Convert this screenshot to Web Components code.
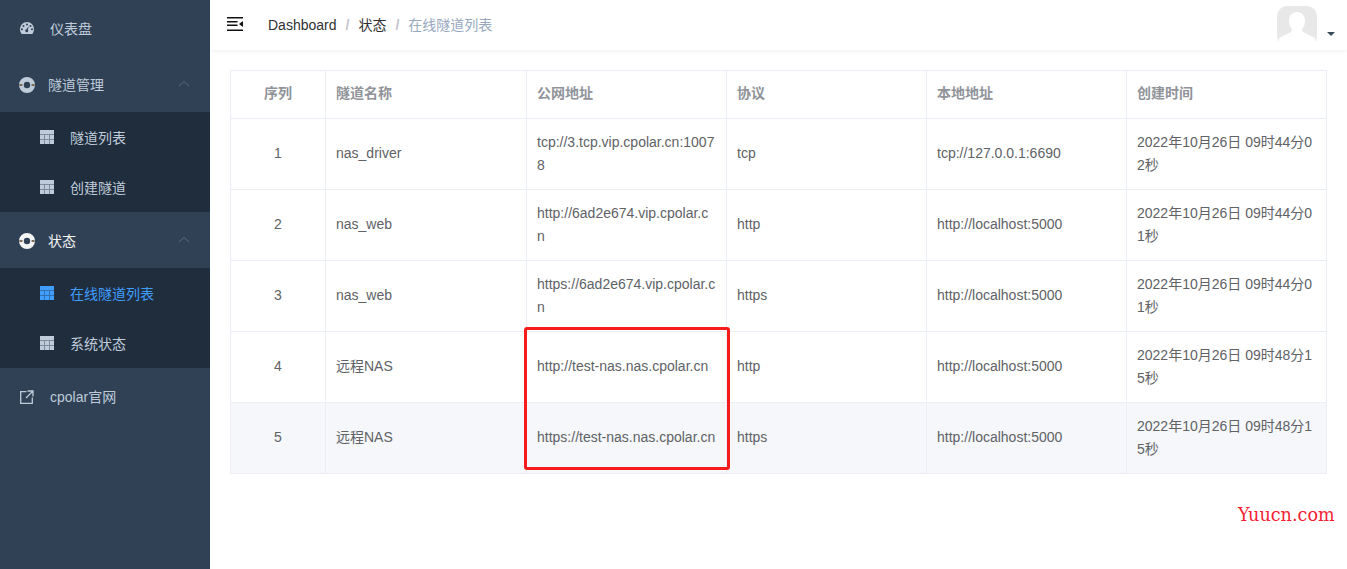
<!DOCTYPE html>
<html lang="zh-CN">
<head>
<meta charset="UTF-8">
<title>在线隧道列表</title>
<style>
  html, body { margin: 0; height: 100%; overflow: hidden; background: #fff; }
  body { font-family: "Liberation Sans", "Noto Sans CJK SC", sans-serif; font-size: 14px; }
</style>
</head>
<body>
<app-shell>
  <side-bar slot="side">
    <menu-item icon="gauge" label="仪表盘"></menu-item>
    <menu-group icon="buoy" label="隧道管理">
      <menu-item sub icon="grid" label="隧道列表"></menu-item>
      <menu-item sub icon="grid" label="创建隧道"></menu-item>
    </menu-group>
    <menu-group icon="buoy" label="状态" current>
      <menu-item sub active icon="grid" label="在线隧道列表"></menu-item>
      <menu-item sub icon="grid" label="系统状态"></menu-item>
    </menu-group>
    <menu-item icon="link" label="cpolar官网"></menu-item>
  </side-bar>
  <top-bar slot="top"></top-bar>
  <tunnel-table></tunnel-table>
  <span class="mark" slot="over">Yuucn.com</span>
</app-shell>

<script>
// small svg set for the sidebar
const ICONS = {
  gauge: `<svg width="14" height="12" viewBox="0 0 14 12"><path fill="currentColor" fill-rule="evenodd" d="M7 0a7 7 0 0 1 7 7c0 1.900-.6 3.500-1.600 5H1.600C.6 10.500 0 8.900 0 7a7 7 0 0 1 7-7zM7 1.500a1 1 0 1 0 0 2 1 1 0 0 0 0-2zM3.500 3a1 1 0 1 0 0 2 1 1 0 0 0 0-2zM10.500 3a1 1 0 1 0 0 2 1 1 0 0 0 0-2zM2 6.200a1 1 0 1 0 0 2 1 1 0 0 0 0-2zM12 6.200a1 1 0 1 0 0 2 1 1 0 0 0 0-2zM8.700 4 6.600 7.200a1.500 1.500 0 1 0 1.300.5z"/></svg>`,
  buoy: `<svg width="16" height="16" viewBox="0 0 16 16"><circle cx="8" cy="8" r="5.600" fill="none" stroke="currentColor" stroke-width="4.800"/><path d="M.4 8h3M12.600 8h3" stroke="#7d6a52" stroke-width="1.800"/></svg>`,
  grid: `<svg width="14" height="14" viewBox="0 0 14 14"><rect width="14" height="14" fill="currentColor"/><path d="M0 4.500h14M0 9.500h14M4.500 5v9M9.500 5v9" stroke="#1f2d3d" stroke-width="1" opacity=".4"/></svg>`,
  link: `<svg width="14" height="14" viewBox="0 0 14 14"><path fill="none" stroke="currentColor" stroke-width="1.300" d="M6.500 1.700H.7v11.600h11.600V7.500M7.500 1h5.500v5.500M13 1 6 8"/></svg>`
};

customElements.define('app-shell', class extends HTMLElement {
  constructor() {
    super();
    this.attachShadow({mode: 'open'}).innerHTML = `
      <style>
        :host { display: flex; height: 569px; position: relative; }
        .main { flex: 1; min-width: 0; display: flex; flex-direction: column; }
        .body { padding: 20px; }
        ::slotted(.mark) {
          position: absolute; left: 1238px; top: 505px;
          font: 17.6px/20px "DejaVu Serif", serif; color: #f51e32;
        }
      </style>
      <slot name="side"></slot>
      <div class="main">
        <slot name="top"></slot>
        <div class="body"><slot></slot></div>
      </div>
      <slot name="over"></slot>
    `;
  }
});

customElements.define('side-bar', class extends HTMLElement {
  constructor() {
    super();
    this.attachShadow({mode: 'open'}).innerHTML = `
      <style>
        :host { display: block; width: 210px; flex: none; background: #304156; }
      </style>
      <slot></slot>
    `;
  }
});

customElements.define('menu-item', class extends HTMLElement {
  constructor() {
    super();
    const sub = this.hasAttribute('sub');
    const active = this.hasAttribute('active');
    const icon = this.getAttribute('icon');
    this.attachShadow({mode: 'open'}).innerHTML = `
      <style>
        :host {
          display: flex; align-items: center;
          height: ${sub ? 50 : 56}px;
          padding-left: ${sub ? 40 : 20}px;
          background: ${sub ? '#1f2d3d' : 'transparent'};
          color: ${active ? '#409eff' : '#bfcbd9'};
          font-size: 14px;
        }
        .i { display: flex; width: 14px; margin-right: 16px; margin-top: ${icon === 'link' ? 2 : 0}px; }
      </style>
      <span class="i">${ICONS[icon]}</span>
      <span>${this.getAttribute('label')}</span>
    `;
  }
});

customElements.define('menu-group', class extends HTMLElement {
  constructor() {
    super();
    const current = this.hasAttribute('current');
    this.attachShadow({mode: 'open'}).innerHTML = `
      <style>
        :host { display: block; }
        .title {
          display: flex; align-items: center; height: 56px;
          padding: 0 20px 0 19px;
          color: ${current ? '#f4f4f5' : '#bfcbd9'};
        }
        .i { display: flex; margin-right: 13px; margin-top: 2px; }
        .label { flex: 1; }
        .arrow { display: flex; color: #5a6a7c; margin-bottom: 2px; }
      </style>
      <div class="title">
        <span class="i">${ICONS[this.getAttribute('icon')]}</span>
        <span class="label">${this.getAttribute('label')}</span>
        <span class="arrow"><svg width="12" height="7" viewBox="0 0 12 7"><path d="M1 6l5-4.400 5 4.400" fill="none" stroke="currentColor" stroke-width="1"/></svg></span>
      </div>
      <slot></slot>
    `;
  }
});

customElements.define('top-bar', class extends HTMLElement {
  constructor() {
    super();
    this.attachShadow({mode: 'open'}).innerHTML = `
      <style>
        :host {
          display: flex; align-items: center; height: 50px; flex: none;
          padding: 0 12px 0 17px;
          background: #fff; box-shadow: 0 1px 4px rgba(0, 21, 41, .08);
          font-size: 14px; color: #303133;
        }
        .ham { display: block; flex: none; margin-right: 25px; margin-top: -2px; }
        .crumb { flex: 1; line-height: 50px; }
        .sep { color: #c0c4cc; margin: 0 9px; font-weight: 700; }
        .last { color: #97a8be; }
        .who { display: flex; align-items: flex-end; margin-top: 1px; }
        .caret { width: 0; height: 0; border: 4px solid transparent; border-top: 4px solid #3a4a5a; border-bottom: 0; margin: 0 0 10px 10px; }
      </style>
      <svg class="ham" width="16" height="14" viewBox="0 0 16 14"><path fill="#111" d="M0 0h16v1.600H0zM0 4h10.500v1.500H0zM0 7.500h10.500V9H0zM0 12.400h16V14H0zM16 4v6l-4-3z"/></svg>
      <div class="crumb"><span>Dashboard</span><span class="sep">/</span><span>状态</span><span class="sep">/</span><span class="last">在线隧道列表</span></div>
      <div class="who">
        <svg width="40" height="40" viewBox="0 0 40 40"><rect width="40" height="40" rx="10" fill="#e8e8e8"/><path fill="#fff" d="M20 6c5 0 8 3.500 8 9 0 3-1 5.500-2.500 7.500-.8 1.100-.5 3 1 3.800L36 31c1 .5 1.500 1 2 2v5l-3 2H5l-3-2v-5c.5-1 1-1.500 2-2l9.500-4.700c1.500-.8 1.800-2.700 1-3.800C13 20.500 12 18 12 15c0-5.500 3-9 8-9z"/></svg>
        <span class="caret"></span>
      </div>
    `;
  }
});

const ROWS = [
  ['1', 'nas_driver', 'tcp://3.tcp.vip.cpolar.cn:10078', 'tcp', 'tcp://127.0.0.1:6690', '2022年10月26日 09时44分02秒'],
  ['2', 'nas_web', 'http://6ad2e674.vip.cpolar.cn', 'http', 'http://localhost:5000', '2022年10月26日 09时44分01秒'],
  ['3', 'nas_web', 'https://6ad2e674.vip.cpolar.cn', 'https', 'http://localhost:5000', '2022年10月26日 09时44分01秒'],
  ['4', '远程NAS', 'http://test-nas.nas.cpolar.cn', 'http', 'http://localhost:5000', '2022年10月26日 09时48分15秒'],
  ['5', '远程NAS', 'https://test-nas.nas.cpolar.cn', 'https', 'http://localhost:5000', '2022年10月26日 09时48分15秒']
];
const HEAD = ['序列', '隧道名称', '公网地址', '协议', '本地地址', '创建时间'];
const isOneLine = (col, row) => col !== 5 && !(col === 2 && row < 3);

customElements.define('tunnel-table', class extends HTMLElement {
  constructor() {
    super();
    const head = HEAD.map(t => `<th>${t}</th>`).join('');
    const rows = ROWS.map((r, ri) =>
      `<tr>${r.map((t, ci) => `<td class="${isOneLine(ci, ri) ? 'one' : ''}">${t}</td>`).join('')}</tr>`
    ).join('');
    this.attachShadow({mode: 'open'}).innerHTML = `
      <style>
        :host { display: block; position: relative; }
        table { width: 1097px; table-layout: fixed; border-collapse: separate; border-spacing: 0; font-size: 14px; line-height: 23px; color: #606266; }
        th, td { border: solid #ebeef5; border-width: 0 1px 1px 0; padding: 12px 10px; text-align: left; word-break: break-all; font-weight: 400; }
        th:first-child, td:first-child { border-left-width: 1px; text-align: center; }
        th { border-top-width: 1px; padding: 11px 10px 13px; font-weight: 700; color: #909399; }
        td.one { padding: 11px 10px 13px; }
        tr:last-child td { background: #f5f7fa; }
        .hl {
          position: absolute; left: 294px; top: 257px; width: 200px; height: 137px;
          border: 3px solid #f71c1c; border-radius: 3px;
        }
      </style>
      <table>
        <colgroup><col style="width:96px"><col style="width:201px"><col style="width:200px"><col style="width:200px"><col style="width:200px"><col style="width:200px"></colgroup>
        <thead><tr>${head}</tr></thead>
        <tbody>${rows}</tbody>
      </table>
      <div class="hl"></div>
    `;
  }
});
</script>
</body>
</html>
